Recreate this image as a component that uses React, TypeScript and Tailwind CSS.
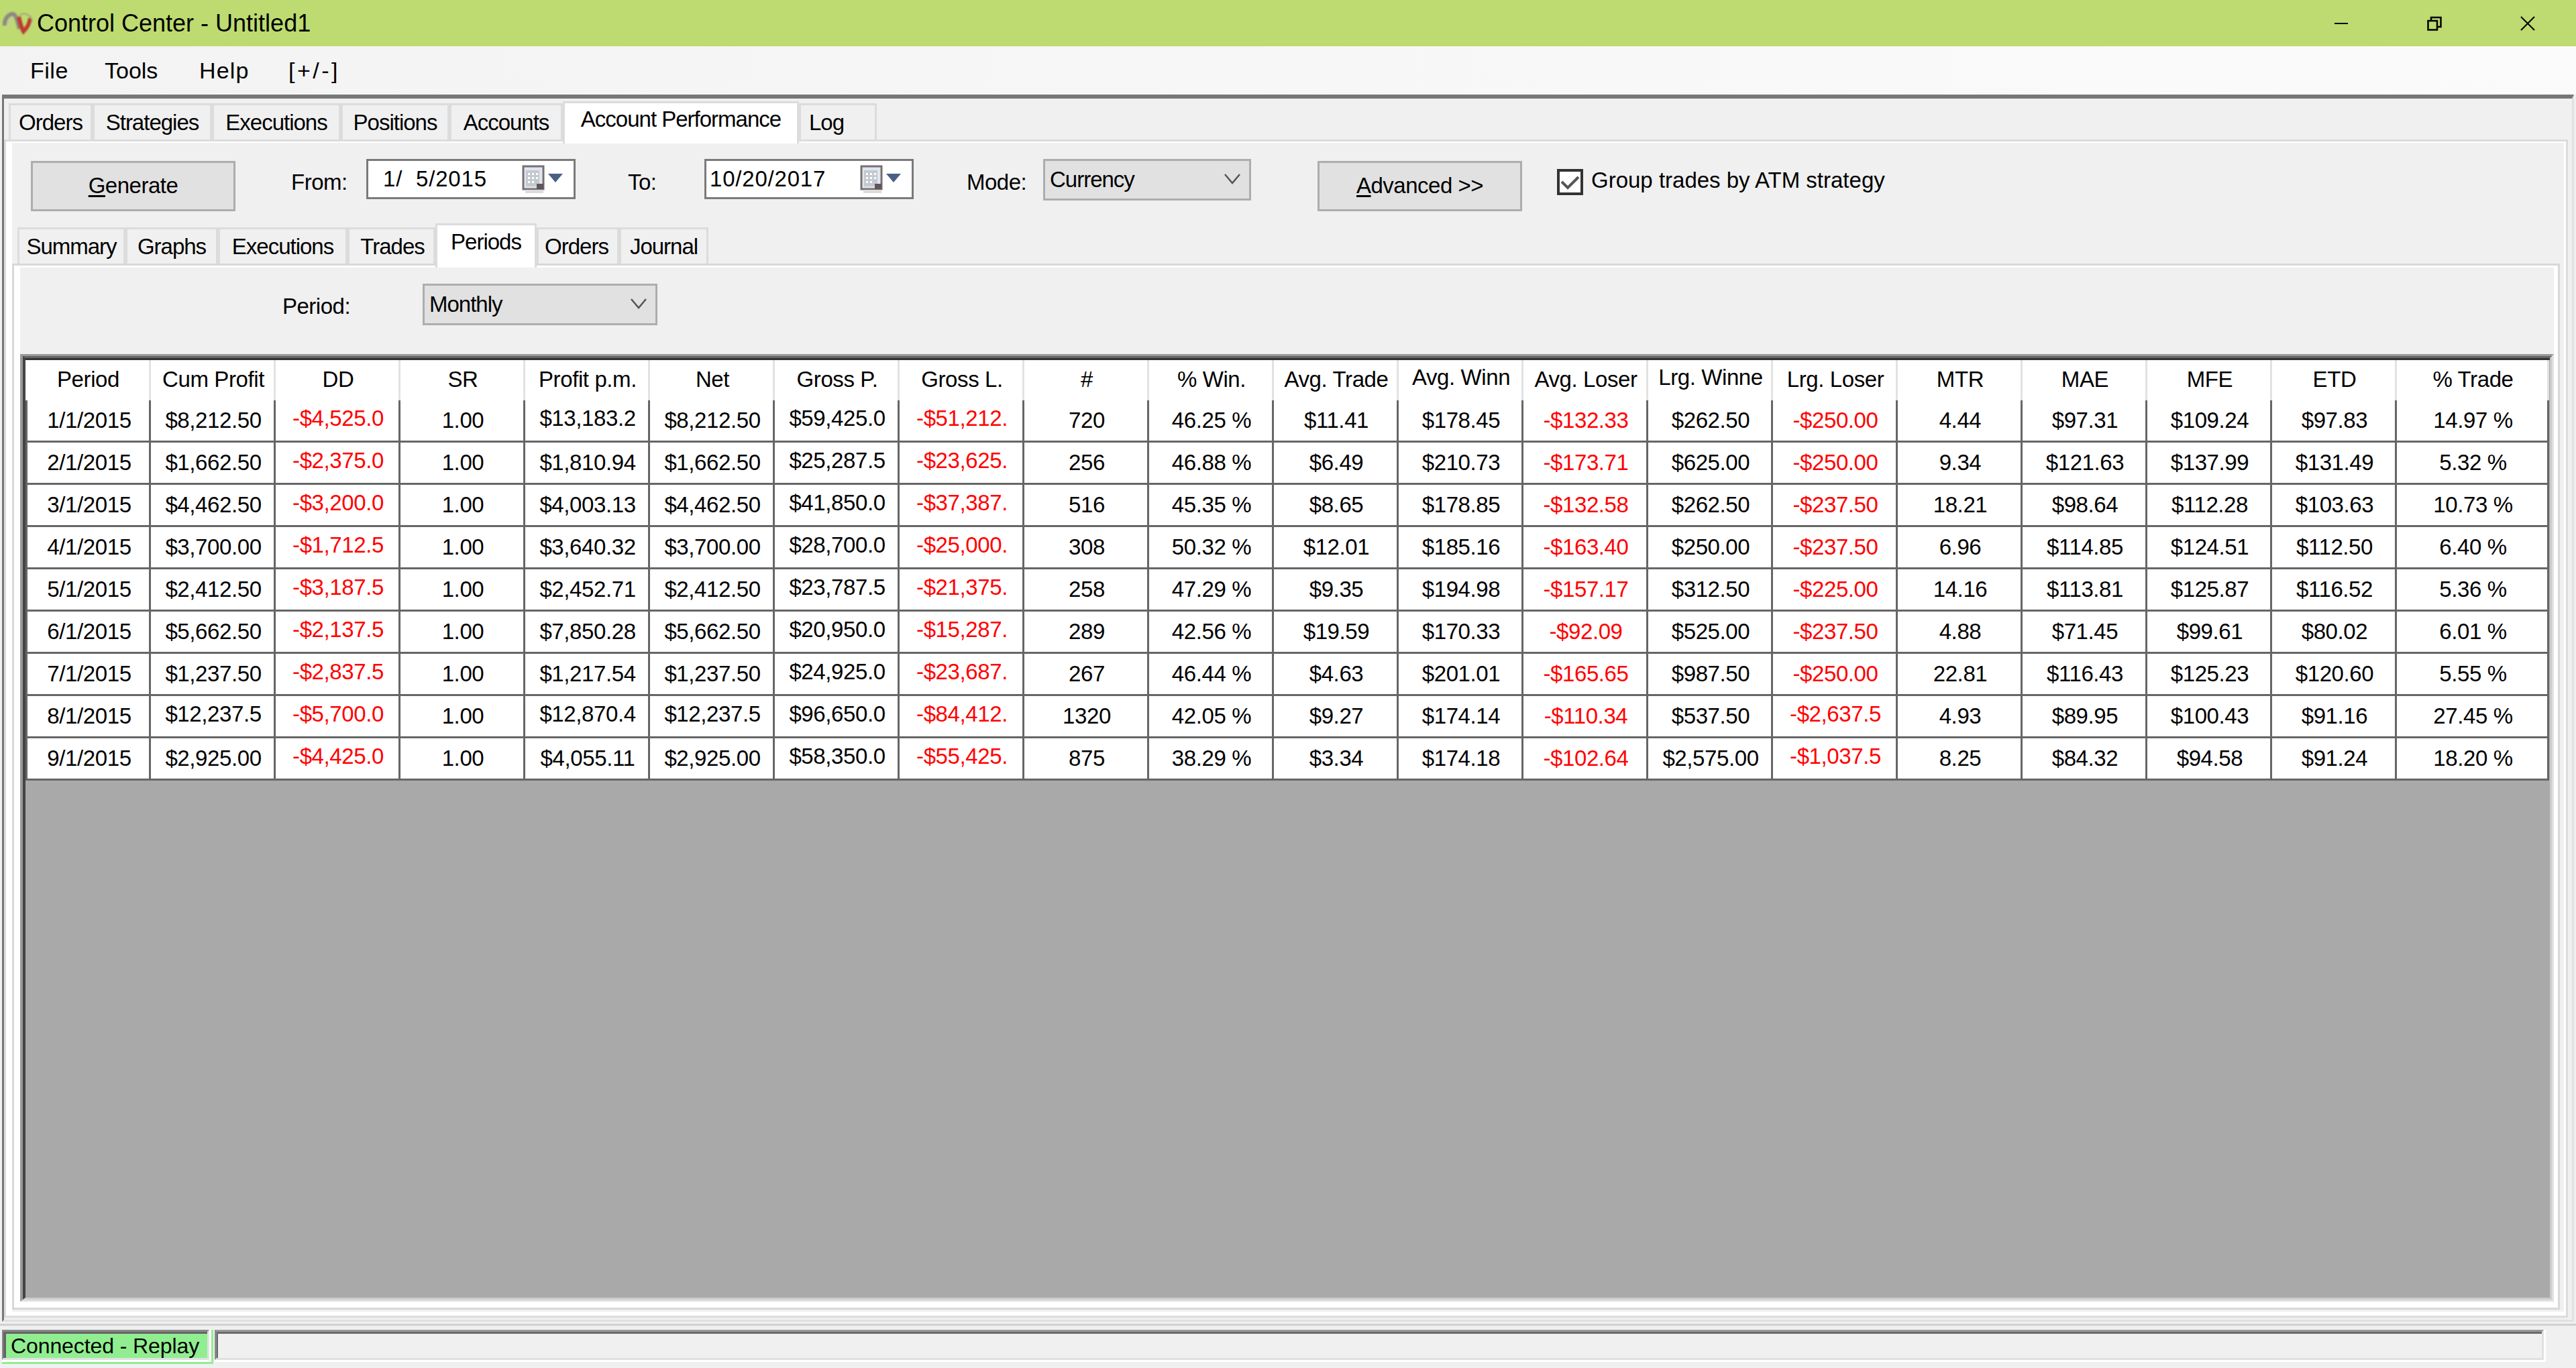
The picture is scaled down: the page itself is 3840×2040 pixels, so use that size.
import React from "react";

const headers = ["Period","Cum Profit","DD","SR","Profit p.m.","Net","Gross P.","Gross L.","#","% Win.","Avg. Trade","Avg. Winn","Avg. Loser","Lrg. Winne","Lrg. Loser","MTR","MAE","MFE","ETD","% Trade"];
const rows = [
"1/1/2015,$8|212.50,-$4|525.0,1.00,$13|183.2,$8|212.50,$59|425.0,-$51|212.,720,46.25 %,$11.41,$178.45,-$132.33,$262.50,-$250.00,4.44,$97.31,$109.24,$97.83,14.97 %",
"2/1/2015,$1|662.50,-$2|375.0,1.00,$1|810.94,$1|662.50,$25|287.5,-$23|625.,256,46.88 %,$6.49,$210.73,-$173.71,$625.00,-$250.00,9.34,$121.63,$137.99,$131.49,5.32 %",
"3/1/2015,$4|462.50,-$3|200.0,1.00,$4|003.13,$4|462.50,$41|850.0,-$37|387.,516,45.35 %,$8.65,$178.85,-$132.58,$262.50,-$237.50,18.21,$98.64,$112.28,$103.63,10.73 %",
"4/1/2015,$3|700.00,-$1|712.5,1.00,$3|640.32,$3|700.00,$28|700.0,-$25|000.,308,50.32 %,$12.01,$185.16,-$163.40,$250.00,-$237.50,6.96,$114.85,$124.51,$112.50,6.40 %",
"5/1/2015,$2|412.50,-$3|187.5,1.00,$2|452.71,$2|412.50,$23|787.5,-$21|375.,258,47.29 %,$9.35,$194.98,-$157.17,$312.50,-$225.00,14.16,$113.81,$125.87,$116.52,5.36 %",
"6/1/2015,$5|662.50,-$2|137.5,1.00,$7|850.28,$5|662.50,$20|950.0,-$15|287.,289,42.56 %,$19.59,$170.33,-$92.09,$525.00,-$237.50,4.88,$71.45,$99.61,$80.02,6.01 %",
"7/1/2015,$1|237.50,-$2|837.5,1.00,$1|217.54,$1|237.50,$24|925.0,-$23|687.,267,46.44 %,$4.63,$201.01,-$165.65,$987.50,-$250.00,22.81,$116.43,$125.23,$120.60,5.55 %",
"8/1/2015,$12|237.5,-$5|700.0,1.00,$12|870.4,$12|237.5,$96|650.0,-$84|412.,1320,42.05 %,$9.27,$174.14,-$110.34,$537.50,-$2|637.5,4.93,$89.95,$100.43,$91.16,27.45 %",
"9/1/2015,$2|925.00,-$4|425.0,1.00,$4|055.11,$2|925.00,$58|350.0,-$55|425.,875,38.29 %,$3.34,$174.18,-$102.64,$2|575.00,-$1|037.5,8.25,$84.32,$94.58,$91.24,18.20 %",
].map((r) => r.split(",").map((c) => c.replace("|", ",")));

const isRaised = (v: string) => v.includes("$") && !/\.\d\d$/.test(v);

const mainTabs = [
  { t: "Orders", w: "w-[125px]", x: "" },
  { t: "Strategies", w: "w-[178px]", x: "" },
  { t: "Executions", w: "w-[192px]", x: "" },
  { t: "Positions", w: "w-[162px]", x: "" },
  { t: "Accounts", w: "w-[169px]", x: "" },
  { t: "Account Performance", w: "w-[352px]", active: true, x: "tracking-[-0.6px]" },
  { t: "Log", w: "w-[116px]", x: "pr-[34px]" },
];
const subTabs = [
  { t: "Summary", w: "w-[161px]", x: "tracking-[-1.6px]" },
  { t: "Graphs", w: "w-[138px]", x: "" },
  { t: "Executions", w: "w-[193px]", x: "" },
  { t: "Trades", w: "w-[131px]", x: "pl-[3px]" },
  { t: "Periods", w: "w-[151px]", active: true, x: "" },
  { t: "Orders", w: "w-[123px]", x: "tracking-[-1.5px] pr-[4px]" },
  { t: "Journal", w: "w-[133px]", x: "" },
];

function Tab({ t, w, active, h, x }: { t: string; w: string; active?: boolean; h: string; x: string }) {
  if (active) {
    return (
      <div className={`${w} ${h} relative z-10 -mb-[6px] flex shrink-0 items-center justify-center border-x-[3px] border-t-[3px] border-[#dcdcdc] bg-white pb-[13px] text-[33px] tracking-[-1px] ${x}`}>
        {t}
      </div>
    );
  }
  return (
    <div className={`${w} flex h-[54px] shrink-0 items-center justify-center border-x-[3px] border-t-[3px] border-[#dcdcdc] bg-[#f0f0f0] text-[33px] tracking-[-1px] ${x}`}>
      {t}
    </div>
  );
}

function Combo({ label, w }: { label: string; w: string }) {
  return (
    <div className={`${w} flex h-[62px] shrink-0 items-center justify-between border-[3px] border-[#adadad] bg-[#e1e1e1] pl-[7px] pr-[12px] text-[33px] tracking-[-1px]`}>
      <span>{label}</span>
      <svg width="26" height="18" viewBox="0 0 26 18" className="mb-[2px]">
        <path d="M2 2 L13 15 L24 2" fill="none" stroke="#555" strokeWidth="2.5" />
      </svg>
    </div>
  );
}

function DatePicker({ value, pad }: { value: string; pad: string }) {
  return (
    <div className="flex h-[60px] w-[312px] shrink-0 items-center border-[3px] border-[#7a7a7a] bg-white text-[33px] tracking-[0.8px]">
      <span className={`${pad} w-[229px] shrink-0 whitespace-pre pb-[1px]`}>{value}</span>
      <svg width="34" height="44" viewBox="0 0 34 44" className="mt-[2px] shrink-0">
        <rect x="2" y="2" width="30" height="34" fill="#dfe6f2" stroke="#7a6f6f" strokeWidth="3" />
        <rect x="6" y="8" width="20" height="24" fill="#c4c9cf" />
        <rect x="9" y="12" width="3" height="3" fill="#fff" />
        <rect x="15" y="12" width="3" height="3" fill="#fff" />
        <rect x="21" y="12" width="3" height="3" fill="#fff" />
        <rect x="9" y="18" width="3" height="3" fill="#fff" />
        <rect x="15" y="18" width="3" height="3" fill="#fff" />
        <rect x="21" y="18" width="3" height="3" fill="#fff" />
        <rect x="9" y="24" width="3" height="3" fill="#fff" />
        <rect x="15" y="24" width="3" height="3" fill="#fff" />
        <rect x="22" y="28" width="10" height="8" fill="#5e5658" />
        <rect x="5" y="37" width="27" height="5" fill="#dcdcdc" />
      </svg>
      <svg width="22" height="13" viewBox="0 0 22 13" className="ml-[5px] mb-[4px] shrink-0">
        <path d="M0 0 H22 L11 13 Z" fill="#4a5f85" />
      </svg>
    </div>
  );
}

function WinButton({ first, rest }: { first: string; rest: string }) {
  return (
    <div className="mt-[3px] flex h-[75px] w-[305px] shrink-0 items-center justify-center border-[3px] border-[#adadad] bg-[#e1e1e1] pb-[2px] text-[33px] tracking-[-0.5px]">
      <span>
        <span className="underline underline-offset-[3px]">{first}</span>
        {rest}
      </span>
    </div>
  );
}

export default function App() {
  return (
    <div className="flex h-[2040px] w-[3840px] flex-col overflow-hidden bg-[#f0f0f0] text-black [font-family:'Liberation_Sans',Arial,sans-serif]">
      {/* Title bar */}
      <div className="flex h-[69px] shrink-0 items-center bg-[#bddb70]">
        <svg width="48" height="36" viewBox="0 0 48 36" className="ml-[4px] shrink-0 blur-[1px]">
          <path d="M3 21 C2 9 11 3 16 4 C21 6 22 16 25 26" fill="none" stroke="#8d8a80" strokeWidth="6" />
          <path d="M9 22 C9 15 12 11 15 10" fill="none" stroke="#c7c6ae" strokeWidth="3" />
          <path d="M24 8 C26 17 28 25 31 30 C36 25 40 18 41 10" fill="none" stroke="#bf3a30" strokeWidth="6" />
          <path d="M25 6 C32 1 42 4 44 15" fill="none" stroke="#a3a579" strokeWidth="2" />
        </svg>
        <span className="ml-[3px] text-[36px]">Control Center - Untitled1</span>
        <div className="ml-auto flex items-center">
          <svg width="20" height="20" viewBox="0 0 20 20" className="mr-[118px]">
            <path d="M0 10 H20" stroke="#000" strokeWidth="2" />
          </svg>
          <svg width="22" height="22" viewBox="0 0 22 22" className="mr-[117px]">
            <path d="M1.5 7 H15 V20.5 H1.5 Z M6 7 V2 H20.5 V16 H15" fill="none" stroke="#000" strokeWidth="2.5" />
          </svg>
          <svg width="22" height="22" viewBox="0 0 22 22" className="mr-[61px]">
            <path d="M1 1 L21 21 M21 1 L1 21" stroke="#000" strokeWidth="2" />
          </svg>
        </div>
      </div>

      {/* Menu */}
      <div className="flex h-[72px] shrink-0 items-center bg-gradient-to-r from-[#f3f3f3] to-[#fbfbfb] text-[34px]">
        <span className="ml-[45px] w-[111px] tracking-[0.5px]">File</span>
        <span className="w-[141px]">Tools</span>
        <span className="w-[133px] tracking-[1.2px]">Help</span>
        <span className="tracking-[3.5px]">[+/-]</span>
      </div>

      {/* Main frame */}
      <div className="ml-[3px] mr-[3px] flex h-[1830px] shrink-0 flex-col border-l-[3px] border-t-[6px] border-r-[3px] border-b-[3px] border-l-[#777777] border-t-[#777777] border-r-[#e0e0e0] border-b-[#e0e0e0] bg-[#f0f0f0]">
        {/* Top tabs */}
        <div className="flex h-[61px] shrink-0 items-end pl-[7px]">
          {mainTabs.map((x) => (
            <Tab key={x.t} t={x.t} w={x.w} active={x.active} h="h-[63px]" x={x.x} />
          ))}
        </div>
        {/* Page 1 */}
        <div className="mb-[3px] mr-[6px] flex min-h-0 flex-1 flex-col border-[3px] border-[#dcdcdc]">
          <div className="flex min-h-0 flex-1 flex-col border-b-[6px] border-l-[9px] border-r-[3px] border-t-[2px] border-white bg-[#f0f0f0]">
            {/* Toolbar */}
            <div className="flex h-[120px] shrink-0 items-start pl-[28px] pt-[24px] text-[33px] tracking-[-0.5px]">
              <WinButton first="G" rest="enerate" />
              <div className="ml-[83px] flex h-[70px] w-[112px] shrink-0 items-center">From:</div>
              <DatePicker value="1/  5/2015" pad="pl-[22px]" />
              <div className="ml-[78px] flex h-[70px] w-[114px] shrink-0 items-center">To:</div>
              <DatePicker value="10/20/2017" pad="pl-[5px]" />
              <div className="ml-[79px] flex h-[70px] w-[114px] shrink-0 items-center">Mode:</div>
              <Combo label="Currency" w="w-[310px]" />
              <div className="ml-[99px]">
                <WinButton first="A" rest="dvanced >>" />
              </div>
              <div className="ml-[52px] mt-[15px] flex h-[39px] w-[39px] shrink-0 items-center justify-center border-[4px] border-[#333333] bg-white">
                <svg width="31" height="31" viewBox="0 0 31 31">
                  <path d="M3 15 L12 24 L28 8" fill="none" stroke="#555" strokeWidth="4" />
                </svg>
              </div>
              <div className="ml-[12px] mt-[7px] tracking-[0px]">Group trades by ATM strategy</div>
            </div>

            {/* Sub tabs */}
            <div className="flex h-[60px] shrink-0 items-end pl-[8px]">
              {subTabs.map((x) => (
                <Tab key={x.t} t={x.t} w={x.w} active={x.active} h="h-[66px]" x={x.x} />
              ))}
            </div>

            {/* Page 2 */}
            <div className="mb-[3px] mr-[6px] flex min-h-0 flex-1 flex-col border-[3px] border-[#d8d8d8]">
              <div className="flex min-h-0 flex-1 flex-col border-b-[9px] border-l-[9px] border-r-[6px] border-t-[3px] border-white bg-[#f0f0f0]">
                <div className="flex h-[129px] shrink-0 items-start pl-[391px] pt-[24px] text-[33px]">
                  <div className="flex h-[68px] w-[209px] shrink-0 items-center tracking-[-0.5px]">Period:</div>
                  <Combo label="Monthly" w="w-[350px]" />
                </div>

                {/* Grid frame */}
                <div className="flex min-h-0 flex-1 flex-col border-b-[3px] border-l-[4px] border-r-[3px] border-t-[3px] border-b-[#e0e0e0] border-l-[#999999] border-r-[#e0e0e0] border-t-[#999999]">
                  <div className="flex min-h-0 flex-1 flex-col border-b-[3px] border-l-[4px] border-r-[3px] border-t-[3px] border-b-[#cccccc] border-l-[#444444] border-r-[#cccccc] border-t-[#666666]">
                    <div className="min-h-0 flex-1 border-t-[3px] border-[#333333] bg-[#a9a9a9]">
                      <div className="grid grid-cols-[187px_repeat(18,186px)_227px] text-[33px] tracking-[-0.4px]">
                        {headers.map((h) => (
                          <div
                            key={h}
                            className={`flex h-[60px] items-center justify-center whitespace-nowrap border-r-[3px] border-[#e2e2e2] bg-white pl-[3px] ${h === "Avg. Winn" || h === "Lrg. Winne" ? "pb-[8px]" : "pb-[3px]"}`}
                          >
                            {h}
                          </div>
                        ))}
                        {rows.map((row, r) =>
                          row.map((v, c) => (
                            <div
                              key={`${r}-${c}`}
                              className={`flex h-[63px] items-center justify-center overflow-hidden whitespace-nowrap border-b-[3px] border-r-[3px] border-[#666666] bg-white pl-[3px] ${c === 0 ? "border-l-[3px]" : ""} ${v.startsWith("-") ? "text-[#ff0000]" : ""} ${isRaised(v) ? "pb-[6px]" : ""}`}
                            >
                              {v}
                            </div>
                          ))
                        )}
                      </div>
                    </div>
                  </div>
                </div>
              </div>
            </div>
          </div>
        </div>
      </div>

      {/* Status bar */}
      <div className="mt-[3px] flex min-h-0 flex-1 flex-col border-t-[3px] border-[#d0d0d0] bg-[#f0f0f0] pt-[6px]">
        <div className="flex h-[51px] shrink-0 pl-[3px]">
          <div className="h-[51px] w-[315px] shrink-0 border-b-[3px] border-r-[3px] border-[#90ee90]">
            <div className="h-full border-b-[3px] border-r-[3px] border-white">
              <div className="h-full border-b-[3px] border-l-[2px] border-r-[3px] border-t-[3px] border-b-[#e0e0e0] border-l-[#888888] border-r-[#e0e0e0] border-t-[#888888]">
                <div className="flex h-full items-center border-l-[4px] border-t-[3px] border-[#666666] bg-[#90ee90] pl-[7px] text-[32px] tracking-[-0.1px]">
                  Connected - Replay
                </div>
              </div>
            </div>
          </div>
          <div className="ml-[2px] h-[48px] w-[3475px] shrink-0 border-b-[3px] border-r-[3px] border-white">
            <div className="h-full border-b-[3px] border-l-[3px] border-r-[3px] border-t-[3px] border-b-[#e0e0e0] border-l-[#888888] border-r-[#e0e0e0] border-t-[#999999]">
              <div className="h-full border-l-[2px] border-t-[3px] border-[#6b6b6b] bg-[#f0f0f0]" />
            </div>
          </div>
        </div>
      </div>
    </div>
  );
}
